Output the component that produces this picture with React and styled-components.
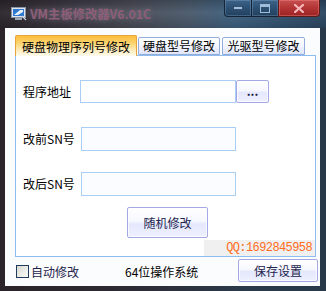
import React from 'react';
import styled, { createGlobalStyle } from 'styled-components';

const Global = createGlobalStyle`
  html, body { margin: 0; padding: 0; background: #262a33; }
  body { font-family: "Noto Sans CJK SC", "Noto Sans", sans-serif; }
  * { box-sizing: border-box; }
`;

const Window = styled.div`
  width: 326px;
  height: 291px;
  display: flex;
  flex-direction: column;
  overflow: hidden;
  background: linear-gradient(90deg, #2a2329 0%, #2d2b34 40%, #2a3a4b 75%, #28394a 100%);
`;

const TitleBar = styled.div`
  height: 28px;
  flex: none;
  display: flex;
  align-items: flex-start;
  background:
    linear-gradient(180deg, rgba(0,0,0,0.18) 0%, rgba(255,255,255,0.04) 45%, rgba(0,0,0,0.12) 100%),
    linear-gradient(90deg, #2c262c 0%, #3a3640 18%, #4a4d58 42%, #4a5a6c 58%, #3d6080 72%, #335472 85%, #2c4762 100%);
`;

const AppIcon = styled.svg`
  margin: 7px 0 0 11px;
  flex: none;
`;

const Title = styled.div`
  margin: 5px 0 0 3px;
  font-size: 12.3px;
  font-weight: 700;
  line-height: 18px;
  color: #8e5e78;
  text-shadow: 0 0 6px rgba(200, 200, 220, 0.35);
  white-space: nowrap;
`;

const Controls = styled.div`
  margin-left: auto;
  margin-right: 6px;
  display: flex;
  height: 17px;
`;

const CtlButton = styled.div`
  width: ${p => p.$w}px;
  height: 17px;
  display: flex;
  align-items: center;
  justify-content: center;
  border: 1px solid ${p => (p.$close ? '#5a1a1a' : '#142436')};
  border-top: none;
  margin-left: -1px;
  border-radius: ${p => p.$radius || '0'};
  background: ${p =>
    p.$close
      ? 'linear-gradient(180deg, #c85050 0%, #b33434 50%, #9c2424 100%)'
      : 'linear-gradient(180deg, #3e6488 0%, #2c5072 50%, #23405e 100%)'};
  box-shadow: inset 0 0 0 1px ${p => (p.$close ? 'rgba(255,150,150,0.35)' : 'rgba(140,180,220,0.3)')};
`;

const Client = styled.div`
  flex: 1;
  margin: 0 6px 5px 5px;
  background: #fbfcfe;
  padding: 7px 0 0 10px;
  display: flex;
  flex-direction: column;
`;

const TabStrip = styled.div`
  display: flex;
  align-items: flex-end;
  height: 20px;
  position: relative;
  z-index: 1;
`;

const Tab = styled.div`
  height: ${p => (p.$active ? 21 : 18)}px;
  width: ${p => p.$w}px;
  margin-left: ${p => p.$gap || 0}px;
  margin-bottom: ${p => (p.$active ? -1 : 0)}px;
  display: flex;
  align-items: center;
  justify-content: center;
  font-size: 12px;
  line-height: 14px;
  color: #000;
  border: 1px solid ${p => (p.$active ? '#e8a33a' : '#94acdc')};
  border-bottom: ${p => (p.$active ? 'none' : '1px solid #94acdc')};
  border-radius: 2px 2px 0 0;
  background: ${p =>
    p.$active
      ? 'linear-gradient(180deg, #fbbe3c 0%, #fcd36e 35%, #fdebb8 70%, #fffbee 100%)'
      : 'linear-gradient(180deg, #ffffff 0%, #f4f6fe 45%, #dfe5fa 100%)'};
  padding-top: ${p => (p.$active ? 1 : 0)}px;
`;

const Panel = styled.div`
  width: 301px;
  height: 202px;
  border: 1px solid #8cbcf0;
  background: #ffffff;
  display: flex;
  flex-direction: column;
  padding-top: 24px;
`;

const Row = styled.div`
  display: flex;
  align-items: center;
  height: ${p => p.$h}px;
  margin-top: ${p => p.$mt || 0}px;
  padding-left: 7px;
`;

const Label = styled.div`
  width: ${p => p.$w}px;
  flex: none;
  font-size: 12px;
  line-height: 14px;
  color: #000;
`;

const Field = styled.input`
  width: ${p => p.$w}px;
  height: 100%;
  border: 1px solid #a9cdf4;
  background: ${p => (p.$tint ? '#fafcff' : '#ffffff')};
  outline: none;
  padding: 0 3px;
  font-size: 12px;
`;

const PushButton = styled.div`
  width: ${p => p.$w}px;
  height: ${p => p.$h}px;
  flex: none;
  display: flex;
  align-items: center;
  justify-content: center;
  font-size: 12px;
  line-height: 14px;
  color: #24244e;
  border: 1px solid #a4a8e4;
  border-radius: 2px;
  background: linear-gradient(180deg, #ffffff 0%, #f7f8fe 45%, #e5e8fd 55%, #eef0fe 100%);
  box-shadow: inset 0 0 0 1px rgba(255,255,255,0.7);
`;

const Dots = styled.span`
  font-size: 12px;
  font-weight: 700;
  color: #1c1c40;
  margin-top: -2px;
`;

const RandomRow = styled.div`
  margin-top: 11px;
  padding-left: 111px;
  display: flex;
`;

const QQBox = styled.div`
  margin-top: 2px;
  align-self: flex-end;
  width: 111px;
  height: 16px;
  background: #f0f0f0;
  color: #ff6c1c;
  font-family: "Liberation Mono", "DejaVu Sans Mono", monospace;
  font-size: 12px;
  letter-spacing: -0.6px;
  line-height: 16px;
  text-align: right;
  padding-right: 3px;
  white-space: nowrap;
`;

const BottomRow = styled.div`
  display: flex;
  align-items: center;
  height: 23px;
  margin-top: 2px;
  padding-left: 1px;
`;

const CheckBox = styled.div`
  width: 13px;
  height: 13px;
  flex: none;
  border: 1px solid #1f3b5e;
  background: linear-gradient(135deg, #d8d8d0 0%, #ebebe6 50%, #fafaf8 100%);
  margin-top: 2px;
`;

const CheckLabel = styled.div`
  margin-left: 2px;
  font-size: 12px;
  line-height: 14px;
  color: #23234a;
  margin-top: 2px;
`;

const OsText = styled.div`
  margin-left: 46px;
  font-size: 12px;
  line-height: 14px;
  color: #000;
  margin-top: 2px;
`;

const SaveWrap = styled.div`
  margin-left: auto;
  margin-right: 2px;
  display: flex;
`;

export default function App() {
  return (
    <>
      <Global />
      <Window>
        <TitleBar>
          <AppIcon width="16" height="14" viewBox="0 0 16 14">
            <rect x="0.5" y="0.5" width="14" height="10" fill="#dfe6ee" stroke="#8a97a6" />
            <rect x="2" y="2" width="11" height="7" fill="#2f78d0" />
            <path d="M3 8 L9 3 L12 3 L12 5 L7 8 Z" fill="#e8f2ff" />
            <rect x="4" y="11" width="7" height="2" fill="#9aa6b4" />
            <path d="M11 9 L15 13" stroke="#c8d0da" strokeWidth="1.2" />
          </AppIcon>
          <Title>VM主板修改器V6.01C</Title>
          <Controls>
            <CtlButton $w={28} $radius="0 0 0 4px">
              <svg width="10" height="4" viewBox="0 0 10 4">
                <rect x="0.5" y="0.5" width="9" height="3" fill="#9fbcd8" stroke="#1c3350" strokeWidth="0.6" />
              </svg>
            </CtlButton>
            <CtlButton $w={28}>
              <svg width="10" height="9" viewBox="0 0 10 9">
                <rect x="0.5" y="0.5" width="9" height="8" fill="none" stroke="#9fbcd8" strokeWidth="1" />
                <rect x="1" y="1" width="8" height="2" fill="#9fbcd8" />
              </svg>
            </CtlButton>
            <CtlButton $w={42} $close $radius="0 0 4px 0">
              <svg width="10" height="9" viewBox="0 0 10 9">
                <path d="M1 1 L9 8 M9 1 L1 8" stroke="#f4b8bc" strokeWidth="2.2" strokeLinecap="square" />
              </svg>
            </CtlButton>
          </Controls>
        </TitleBar>
        <Client>
          <TabStrip>
            <Tab $active $w={122}>硬盘物理序列号修改</Tab>
            <Tab $w={82} $gap={1}>硬盘型号修改</Tab>
            <Tab $w={83} $gap={2}>光驱型号修改</Tab>
          </TabStrip>
          <Panel>
            <Row $h={23}>
              <Label $w={57}>程序地址</Label>
              <Field $w={156} readOnly />
              <PushButton $w={33} $h={23}>
                <Dots>...</Dots>
              </PushButton>
            </Row>
            <Row $h={24} $mt={24}>
              <Label $w={58}>改前SN号</Label>
              <Field $w={155} $tint readOnly />
            </Row>
            <Row $h={24} $mt={21}>
              <Label $w={58}>改后SN号</Label>
              <Field $w={155} $tint readOnly />
            </Row>
            <RandomRow>
              <PushButton $w={81} $h={31}>随机修改</PushButton>
            </RandomRow>
            <QQBox>QQ:1692845958</QQBox>
          </Panel>
          <BottomRow>
            <CheckBox />
            <CheckLabel>自动修改</CheckLabel>
            <OsText>64位操作系统</OsText>
            <SaveWrap>
              <PushButton $w={80} $h={23}>保存设置</PushButton>
            </SaveWrap>
          </BottomRow>
        </Client>
      </Window>
    </>
  );
}
